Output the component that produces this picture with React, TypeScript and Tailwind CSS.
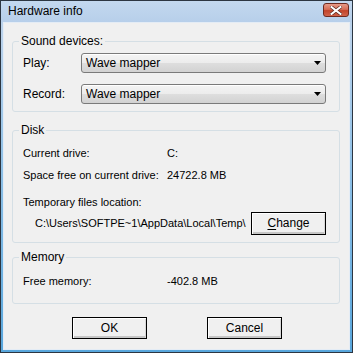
import React from "react";

function Btn({ children, className = "" }: { children: React.ReactNode; className?: string }) {
  return (
    <div
      className={
        "h-[22px] w-[75px] border border-black bg-[#f0f0f0] shadow-[inset_1px_1px_0_#ffffff,inset_-1px_0_0_#d8d8d8,inset_0_-2px_0_#c6c6c6] flex items-center justify-center text-[12px] shrink-0 " +
        className
      }
    >
      {children}
    </div>
  );
}

function Select({ value }: { value: string }) {
  return (
    <div className="flex-1 h-[20px] rounded-[3px] border border-[#7a7a7a] bg-[linear-gradient(#f4f4f4_0%,#ececec_50%,#dedede_50%,#d2d2d2_100%)] shadow-[inset_0_1px_0_#ffffff] flex items-center justify-between pl-[4px] pr-[3px] text-[12px]">
      <span>{value}</span>
      <svg width="8" height="5" viewBox="0 0 8 5">
        <path d="M0 0 H7 L3.5 4 Z" fill="#000" />
      </svg>
    </div>
  );
}

export default function App() {
  return (
    <div className="w-[353px] h-[353px] bg-[linear-gradient(#bad2eb_0%,#bad2eb_10%,#8cbfe6_50%,#58a6dc_100%)] border border-[#2c3642] flex flex-col font-['Liberation_Sans',Arial,sans-serif] text-[11px] leading-[13px] text-black">
      <div className="h-[21px] flex items-start justify-between pl-[7px] pr-[3px] bg-[linear-gradient(#c3d8ef,#b7cfea)]">
        <span className="text-[12px] leading-[21px]">Hardware info</span>
        <div className="mt-[2px] w-[26px] h-[14px] rounded-[3px] border border-[#6e2a20] bg-[linear-gradient(#e69a88_0%,#d66d57_45%,#c2442b_55%,#d0634a_100%)] flex items-center justify-center">
          <svg width="12" height="9" viewBox="0 0 12 9">
            <path d="M1.5 1 L10.5 8 M10.5 1 L1.5 8" stroke="#5a2a22" strokeWidth="3.4" strokeLinecap="square" />
            <path d="M1.5 1 L10.5 8 M10.5 1 L1.5 8" stroke="#ffffff" strokeWidth="2" strokeLinecap="square" />
          </svg>
        </div>
      </div>
      <div className="flex-1 mx-[2px] mb-[2px] bg-[#f0f0f0] border border-[#e4ecf5] flex flex-col">
        <fieldset className="ml-[8px] mr-[9px] mt-[12px] border border-[#d5dfe5] rounded-[3px] pt-[5px] pb-[7px] min-w-0">
          <legend className="ml-[6px] px-[2px] text-[12px]">Sound devices:</legend>
          <div className="pl-[10px] pr-[13px] flex flex-col gap-[11px]">
            <div className="flex items-center h-[20px]">
              <span className="w-[58px] shrink-0 text-[12px]">Play:</span>
              <Select value="Wave mapper" />
            </div>
            <div className="flex items-center h-[20px]">
              <span className="w-[58px] shrink-0 text-[12px]">Record:</span>
              <Select value="Wave mapper" />
            </div>
          </div>
        </fieldset>

        <fieldset className="ml-[8px] mr-[9px] mt-[12px] border border-[#d5dfe5] rounded-[3px] pt-[10px] pb-[7px] min-w-0">
          <legend className="ml-[6px] px-[2px] text-[12px]">Disk</legend>
          <div className="pl-[10px] pr-[13px] flex flex-col">
            <div className="flex h-[13px] items-center">
              <span className="w-[144px] shrink-0">Current drive:</span>
              <span>C:</span>
            </div>
            <div className="flex h-[13px] items-center mt-[9px]">
              <span className="w-[144px] shrink-0">Space free on current drive:</span>
              <span>24722.8 MB</span>
            </div>
            <div className="flex h-[13px] items-center mt-[14px]">
              <span>Temporary files location:</span>
            </div>
            <div className="flex items-center mt-[3px] pl-[12px]">
              <span className="flex-1 min-w-0 overflow-hidden whitespace-nowrap">C:\Users\SOFTPE~1\AppData\Local\Temp\</span>
              <Btn className="h-[23px]">
                <span>
                  <span className="underline underline-offset-2">C</span>hange
                </span>
              </Btn>
            </div>
          </div>
        </fieldset>

        <fieldset className="ml-[8px] mr-[9px] mt-[8px] border border-[#d5dfe5] rounded-[3px] pt-[11px] pb-[15px] min-w-0">
          <legend className="ml-[6px] px-[2px] text-[12px]">Memory</legend>
          <div className="pl-[10px] pr-[13px] flex">
            <span className="w-[144px] shrink-0">Free memory:</span>
            <span>-402.8 MB</span>
          </div>
        </fieldset>

        <div className="flex mt-[13px] pl-[68px] gap-[60px]">
          <Btn>OK</Btn>
          <Btn>Cancel</Btn>
        </div>
      </div>
    </div>
  );
}
